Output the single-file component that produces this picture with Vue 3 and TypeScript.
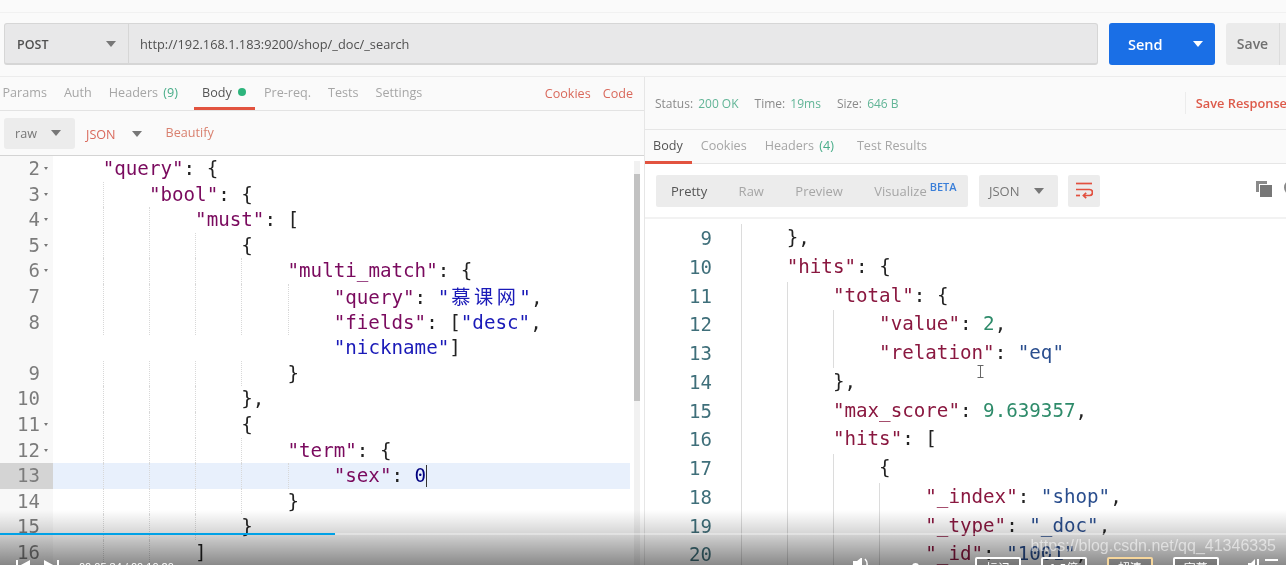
<script setup lang="ts">
interface Tok { c: string; t: string }
interface Row { no: string; indent: number; toks: Tok[]; fold?: boolean; active?: boolean }

// crude json tokenizer, enough for the two panes
function tokens(src: string): Tok[] {
  const out: Tok[] = []
  const re = /"[^"]*"(\s*:)?|-?\d+(\.\d+)?|[^"\d]+/g
  for (const m of src.matchAll(re)) {
    const t = m[0]
    if (t[0] === '"' && m[1]) {
      out.push({ c: 'key', t: t.slice(0, t.lastIndexOf('"') + 1) }, { c: 'punct', t: ':' })
    } else if (t[0] === '"' && /[\u4e00-\u9fff]/.test(t)) {
      out.push({ c: 'str', t: '"' }, { c: 'str cjk', t: t.slice(1, -1) }, { c: 'str', t: '"' })
    } else if (t[0] === '"') {
      out.push({ c: 'str', t })
    } else if (/^-?\d/.test(t)) {
      out.push({ c: 'num', t })
    } else {
      out.push({ c: 'punct', t })
    }
  }
  return out
}

function row(no: string, indent: number, src: string, fold = false, active = false): Row {
  return { no, indent, toks: tokens(src), fold, active }
}

const leftRows: Row[] = [
  row('2', 1, '"query": {', true),
  row('3', 2, '"bool": {', true),
  row('4', 3, '"must": [', true),
  row('5', 4, '{', true),
  row('6', 5, '"multi_match": {', true),
  row('7', 6, '"query": "慕课网",'),
  row('8', 6, '"fields": ["desc",'),
  row('', 0, '                        "nickname"]'),
  row('9', 5, '}'),
  row('10', 4, '},'),
  row('11', 4, '{', true),
  row('12', 5, '"term": {', true),
  row('13', 6, '"sex": 0', false, true),
  row('14', 5, '}'),
  row('15', 4, '}'),
  row('16', 3, ']'),
]

const rightRows: Row[] = [
  row('9', 1, '},'),
  row('10', 1, '"hits": {'),
  row('11', 2, '"total": {'),
  row('12', 3, '"value": 2,'),
  row('13', 3, '"relation": "eq"'),
  row('14', 2, '},'),
  row('15', 2, '"max_score": 9.639357,'),
  row('16', 2, '"hits": ['),
  row('17', 3, '{'),
  row('18', 4, '"_index": "shop",'),
  row('19', 4, '"_type": "_doc",'),
  row('20', 4, '"_id": "1001",'),
]

const reqTabs = ['Params', 'Auth', 'Headers', 'Body', 'Pre-req.', 'Tests', 'Settings']
const resTabs = ['Body', 'Cookies', 'Headers', 'Test Results']
const playerBtns = ['标记', '1.5倍', '超清', '字幕']
</script>

<template>
  <div class="page">
    <div class="topstrip" />

    <div class="request">
      <div class="urlbar">
        <div class="method"><span class="method-label">POST</span><span class="caret" /></div>
        <div class="url">http://192.168.1.183:9200/shop/_doc/_search</div>
      </div>
      <div class="send">
        <span class="send-label">Send</span>
        <span class="caret white" />
      </div>
      <div class="save">
        <span class="save-label">Save</span>
      </div>
    </div>

    <div class="panes">
      <section class="left">
        <div class="tabs">
          <div v-for="t in reqTabs" :key="t" class="tab" :class="{ on: t === 'Body' }">
            {{ t }}
            <span v-if="t === 'Headers'" class="green">(9)</span>
            <span v-if="t === 'Body'" class="dot" />
          </div>
          <div class="tab-links">
            <span>Cookies</span>
            <span>Code</span>
          </div>
        </div>

        <div class="bodybar">
          <div class="raw">raw<span class="caret" /></div>
          <div class="json-link">JSON<span class="caret" /></div>
          <div class="beautify">Beautify</div>
        </div>

        <div class="editor">
          <div class="lines">
            <div v-for="(r, i) in leftRows" :key="i" class="line" :class="{ active: r.active }">
              <div class="gutter">
                <span class="num">{{ r.no }}</span>
                <span class="fold"><i v-if="r.fold" /></span>
              </div>
              <div class="code">
                <span v-for="n in r.indent" :key="n" class="indent" :class="{ guide: n > 1 }" /><span
                  v-for="(k, j) in r.toks"
                  :key="j"
                  :class="k.c"
                >{{ k.t }}</span><span v-if="r.active" class="cursor" />
              </div>
            </div>
          </div>
          <div class="scrollbar"><div class="thumb" /></div>
        </div>
      </section>

      <section class="right">
        <div class="status">
          <span class="stat">Status: <b>200 OK</b></span>
          <span class="stat">Time: <b>19ms</b></span>
          <span class="stat">Size: <b>646 B</b></span>
          <span class="save-resp">Save Response</span>
        </div>

        <div class="res-tabs">
          <div v-for="t in resTabs" :key="t" class="res-tab" :class="{ on: t === 'Body' }">
            {{ t }}
            <span v-if="t === 'Headers'" class="green">(4)</span>
          </div>
        </div>

        <div class="res-tools">
          <div class="modes">
            <span class="mode on">Pretty</span>
            <span class="mode">Raw</span>
            <span class="mode">Preview</span>
            <span class="mode">Visualize<sup>BETA</sup></span>
          </div>
          <div class="fmt">JSON<span class="caret" /></div>
          <div class="wrap">
            <svg width="18" height="18" viewBox="0 0 18 18" fill="none" stroke="#e2503f" stroke-width="1.7">
              <path d="M1 1.5h16" />
              <path d="M1 7.5h13.5a2.9 2.9 0 0 1 0 6H9" />
              <path d="M1 13.5h4" />
              <path d="M11.2 10.8l-2.8 2.7 2.8 2.6" />
            </svg>
          </div>
          <svg class="copy" width="16" height="16" viewBox="0 0 16 16">
            <path d="M0 0h11v3H3v8H0z" fill="#8a8a8a" />
            <rect x="4" y="4" width="12" height="12" fill="#777" />
          </svg>
          <span class="search-edge" />
        </div>

        <div class="res-code">
          <div v-for="r in rightRows" :key="r.no" class="res-line">
            <span class="res-num">{{ r.no }}</span>
            <div class="code">
              <span v-for="n in r.indent" :key="n" class="indent guide" /><span
                v-for="(k, j) in r.toks"
                :key="j"
                :class="k.c"
              >{{ k.t }}</span>
            </div>
          </div>
          <svg class="ibeam" width="7" height="13" viewBox="0 0 7 13" fill="none" stroke="#666" stroke-width="1">
            <path d="M0.5 0.5h6M3.5 0.5v12M0.5 12.5h6" />
          </svg>
        </div>
      </section>
    </div>

    <!-- video player chrome lying over the frame -->
    <div class="player">
      <div class="progress"><div class="played" /></div>
      <div class="watermark">https://blog.csdn.net/qq_41346335</div>
      <div class="controls">
        <svg class="transport" width="44" height="12" viewBox="0 0 44 12" fill="#fff">
          <path d="M0 0h2v12H0zM14 0v12L3 6z" />
          <path d="M28 0v12l11-6zM41 0h2v12h-2z" />
        </svg>
        <span class="time">00:05:34 / 00:10:20</span>
        <svg class="volume" width="22" height="12" viewBox="0 0 22 12" fill="#fff">
          <path d="M0 3h4l5-4v14L4 9H0z" />
          <path d="M12 1a7 7 0 0 1 0 10" fill="none" stroke="#fff" stroke-width="1.5" />
        </svg>
        <span class="knob" />
        <div class="pbtns">
          <span v-for="b in playerBtns" :key="b" class="pbtn" :class="{ hot: b === '超清' }">{{ b }}</span>
        </div>
        <svg class="gear" width="30" height="12" viewBox="0 0 30 12" fill="#fff">
          <path d="M0 4h3l4-4v12L3 8H0zM9 0h2v12H9z" />
          <path d="M17 0h13v2H17z" />
        </svg>
      </div>
    </div>
  </div>
</template>

<style scoped>
.page {
  position: relative;
  width: 1286px;
  height: 565px;
  overflow: hidden;
  background: #fafafa;
  color: #555;
  font-family: "Open Sans", "Noto Sans", sans-serif;
  font-size: 13px;
  filter: blur(0.35px);
}
.topstrip { height: 12px; border-bottom: 1px solid #f1f1f1; }

.caret { display: inline-block; flex: none; width: 0; height: 0; border-left: 5px solid transparent;
  border-right: 5px solid transparent; border-top: 6px solid #777; }
.caret.white { border-top-color: #fff; }

.request { display: flex; height: 42px; margin-top: 10px; padding: 0 0 0 4px; gap: 11px; }
.urlbar { display: flex; width: 1094px; flex: none; background: #e8e8e9; border: 1px solid #d6d6d6;
  border-bottom-width: 2px; border-radius: 3px; box-sizing: border-box; }
.method { width: 124px; box-sizing: border-box; display: flex; align-items: center; justify-content: space-between;
  padding: 0 12px 0 12px; border-right: 1px solid #d6d6d6; font-weight: 600; font-size: 12.5px; color: #505050; }
.method-label { padding-top: 2px; }
.url { display: flex; align-items: center; padding-left: 11px; color: #505050; font-size: 12.8px; }
.send { width: 106px; flex: none; background: #1a6fe6; border-radius: 3px; color: #fff; display: flex; align-items: center;
  justify-content: space-between; padding: 0 12px 0 19px; box-sizing: border-box; font-size: 14.5px; font-weight: 600; }
.save { flex: 1; background: #ebebeb; border-radius: 3px 0 0 3px; display: flex; align-items: center;
  font-size: 14px; font-weight: 600; color: #707070; }
.save-label { width: 53px; text-align: center; border-right: 1px solid #dcdcdc; line-height: 42px; }

.panes { display: flex; margin-top: 11px; border-top: 1px solid #ececec; height: 489px; }
.left { width: 644px; flex: none; display: flex; flex-direction: column; }
.right { flex: 1; min-width: 0; border-left: 1px solid #e6e6e6; display: flex; flex-direction: column; }

.tabs { display: flex; height: 33px; border-bottom: 1px solid #e3e3e3; margin-left: -6px; flex: none; }
.tab { padding: 0 8.5px; line-height: 32px; color: #a6a6a6; font-size: 12.6px; white-space: nowrap; box-sizing: border-box; height: 33px; }
.tab:nth-child(3) { margin-right: 7px; }
.tab:nth-child(4) { margin-right: 1px; }
.tab.on { color: #555; border-bottom: 3px solid #e2533f; }
.green { color: #49ad89; margin-left: 2px; }
.dot { display: inline-block; width: 8px; height: 8px; border-radius: 50%; background: #2db47c; margin-left: 3px; vertical-align: 1px; }
.tab-links { margin-left: auto; display: flex; gap: 12px; padding-right: 11px; line-height: 33px; color: #d9695c; font-size: 12.6px; }

.bodybar { display: flex; align-items: center; height: 44px; border-bottom: 1px solid #d4d4d4; padding-left: 4px; flex: none; }
.raw { display: flex; align-items: center; justify-content: space-between; width: 71px; height: 31px; box-sizing: border-box;
  padding: 0 14px 0 11px; background: #ececec; border-radius: 3px; color: #777; font-size: 12.6px; }
.json-link { display: flex; align-items: center; gap: 16px; margin-left: 11px; color: #d9695c; font-size: 12.6px; margin-top: 2px; }
.beautify { margin-left: 24px; color: #d9806f; font-size: 12.6px; margin-bottom: 2px; }

.editor { position: relative; flex: 1; background: #fff; }
.lines { padding-right: 14px; }
.line { display: flex; height: 25.6px; line-height: 25.6px; font-family: "DejaVu Sans Mono", "Noto Sans CJK SC", monospace; font-size: 19.2px; }
.line.active { background: #e8f0fc; }
.gutter { width: 53px; flex: none; display: flex; background: #f8f8f8; color: #7c7c7c; font-size: 19px; }
.line.active .gutter { background: #d4d4d4; }
.num { width: 40px; text-align: right; }
.fold { flex: 1; position: relative; }
.fold i { position: absolute; left: 4px; top: 11px; width: 0; height: 0; border-left: 2.5px solid transparent;
  border-right: 2.5px solid transparent; border-top: 3px solid #777; }
.code { padding-left: 3.5px; white-space: pre; font-size: 19.2px; }
.indent { display: inline-block; width: 4ch; height: 100%; vertical-align: top; box-sizing: border-box; }
.line .code, .res-line .code { height: 100%; }
.line .indent.guide { border-left: 1px dotted #d8d8d8; }
.key { color: #7a0a5e; }
.str { color: #1a1ab8; }
.cjk { letter-spacing: 3.5px; margin-left: 2px; font-family: "Noto Sans CJK SC", sans-serif; }
.code .num { color: #00007f; width: auto; text-align: left; }
.punct { color: #222; }
.cursor { display: inline-block; width: 1px; height: 22px; vertical-align: -5px; background: #333; }

.scrollbar { position: absolute; right: 4px; top: 5px; bottom: 0; width: 6px; background: #f1f1f1; }
.thumb { margin-top: 13px; height: 227px; background: #c2c2c2; }

.status { display: flex; align-items: center; height: 53px; border-bottom: 1px solid #e6e6e6; padding-left: 10px; gap: 16px;
  box-sizing: border-box; font-size: 12px; color: #8a8a8a; flex: none; }
.stat { flex: none; }
.stat b { font-weight: 400; color: #62b597; margin-left: 2px; }
.save-resp { flex: none; margin-left: auto; margin-right: -1px; padding-left: 10px; border-left: 1px solid #ececec; line-height: 22px;
  color: #dd5a4a; font-weight: 600; font-size: 12.8px; white-space: nowrap; }

.res-tabs { display: flex; height: 34px; border-bottom: 1px solid #e6e6e6; box-sizing: border-box; flex: none; }
.res-tab { padding: 0 9px 0 8px; margin-right: 1px; line-height: 31px; height: 34px; box-sizing: border-box; color: #a6a6a6; font-size: 12.6px; white-space: nowrap; }
.res-tab.on { color: #555; border-bottom: 3px solid #e2533f; }
.res-tab:nth-child(3) { margin-right: 6px; }

.res-tools { display: flex; align-items: center; height: 55px; background: #fff; border-bottom: 2px solid #f2f2f2; padding-left: 11px;
  box-sizing: border-box; flex: none; }
.modes { display: flex; flex: none; align-items: center; width: 312px; height: 32px; background: #ececec; border-radius: 2px; padding-left: 15px;
  box-sizing: border-box; font-size: 13px; color: #a6a6a6; gap: 31.4px; }
.mode.on { color: #555; }
.mode sup { color: #3a7fd9; font-size: 11px; font-weight: 600; line-height: 0; margin-left: 3px; vertical-align: 5px; }
.fmt { display: flex; flex: none; align-items: center; justify-content: space-between; width: 79px; height: 32px; box-sizing: border-box; margin-left: 11px;
  padding: 0 14px 0 10px; background: #ececec; border-radius: 2px; font-size: 13px; color: #777; }
.wrap { display: flex; flex: none; align-items: center; justify-content: center; width: 32px; height: 32px; margin-left: 10px; background: #ececec; border-radius: 2px; }
.copy { margin-left: 156px; margin-top: -4px; flex: none; }
.search-edge { width: 10px; height: 11px; border: 2px solid #888; border-radius: 50%; margin-left: 12px; margin-top: -7px; flex: none; }

.res-code { position: relative; flex: 1; background: #fff; padding-top: 5px; }
.res-line { display: flex; height: 28.75px; line-height: 28.75px; font-family: "DejaVu Sans Mono", monospace; font-size: 19.2px; }
.res-num { width: 67px; flex: none; text-align: right; color: #3f6f7a; font-size: 19px; }
.res-line .code { padding-left: 28.5px; }
.res-line .indent.guide { border-left: 1px solid #dcdcdc; }
.res-line .key { color: #8a1840; }
.res-line .str { color: #2a4e8e; }
.res-line .code .num { color: #2e8b6a; }
.ibeam { position: absolute; left: 332px; top: 146px; }

.player { position: absolute; left: 0; right: 0; bottom: 0; height: 55px;
  background: linear-gradient(to bottom, rgba(0,0,0,0) 0, rgba(0,0,0,.16) 42%, rgba(0,0,0,.26) 60%, rgba(0,0,0,.46) 100%); }
.progress { position: absolute; left: 0; right: 0; top: 23px; height: 2px; background: rgba(255,255,255,.35); }
.played { width: 335px; height: 100%; background: #00a1e6; }
.watermark { position: absolute; right: 10px; top: 25px; font-family: "Liberation Sans", sans-serif; font-size: 16px; line-height: 22px;
  color: rgba(255,255,255,.55); }
.controls { position: absolute; left: 0; right: 0; top: 47px; height: 18px; display: flex; align-items: flex-start; }
.transport { margin-left: 16px; margin-top: 3px; flex: none; }
.time { margin-left: 19px; margin-top: 3px; color: #fff; font-size: 11px; font-family: "Liberation Sans", sans-serif; line-height: 14px; white-space: nowrap; }
.volume { margin-left: 679px; margin-top: 1px; flex: none; }
.knob { width: 7px; height: 7px; border-radius: 50%; background: #fff; margin-left: 37px; margin-top: 6px; flex: none; }
.pbtns { display: flex; gap: 20px; margin-left: 56px; flex: none; }
.pbtn { width: 46px; height: 24px; box-sizing: border-box; border: 2px solid #fff; border-radius: 2px; background: rgba(70,70,70,.3); color: #fff;
  text-align: center; font-size: 12px; line-height: 18px; font-family: "Noto Sans CJK SC", sans-serif; }
.pbtn.hot { border-color: #f7d79c; }
.gear { margin-left: 29px; margin-top: 2px; flex: none; }
</style>

<style>
html, body { margin: 0; overflow: hidden; }
</style>
